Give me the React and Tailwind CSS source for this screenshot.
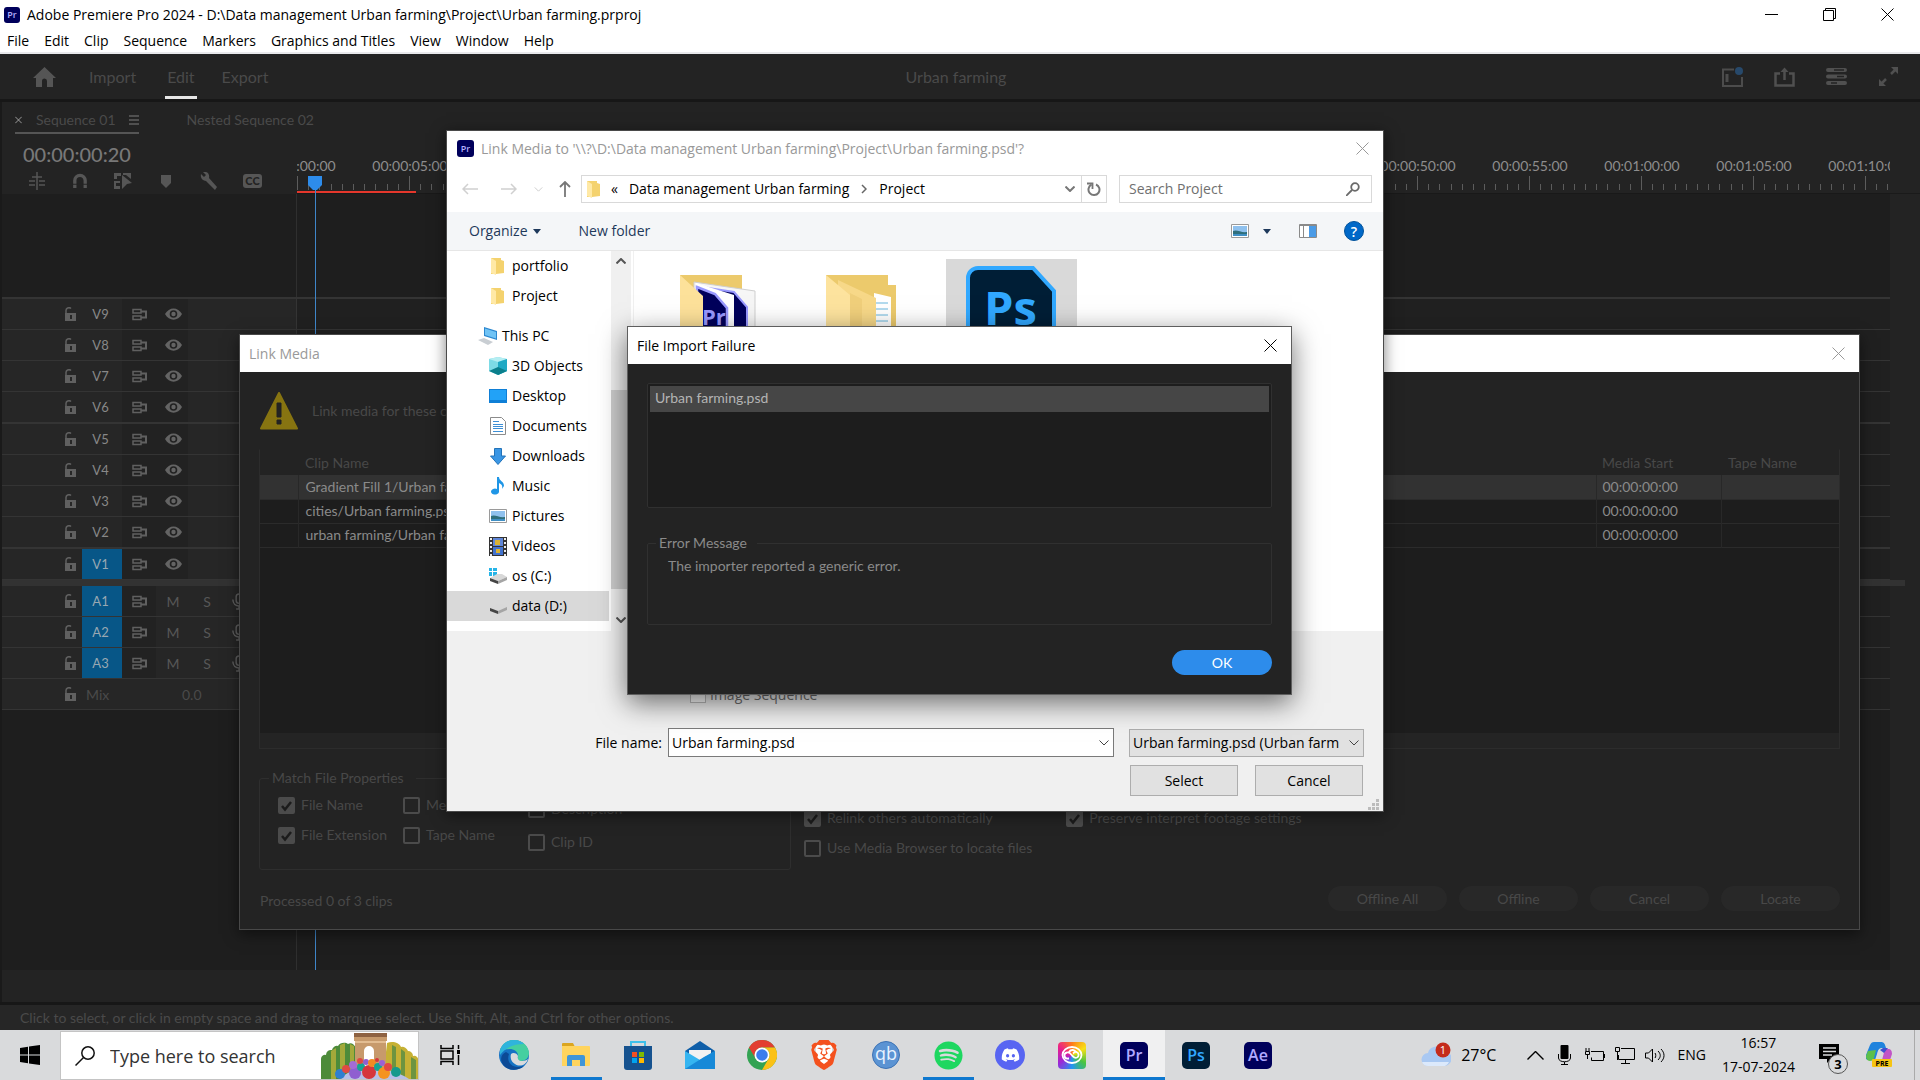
import React from 'react';
import { FaSpotify, FaDiscord } from 'react-icons/fa';
import { FaBrave } from 'react-icons/fa6';

const menus = ['File', 'Edit', 'Clip', 'Sequence', 'Markers', 'Graphics and Titles', 'View', 'Window', 'Help'];

const rulerLabels = [
  '00:00:00:00', '00:00:05:00', '00:00:10:00', '00:00:15:00', '00:00:20:00',
  '00:00:25:00', '00:00:30:00', '00:00:35:00', '00:00:40:00', '00:00:45:00',
  '00:00:50:00', '00:00:55:00', '00:01:00:00', '00:01:05:00', '00:01:10:00',
];

const videoTracks = ['V9', 'V8', 'V7', 'V6', 'V5', 'V4', 'V3', 'V2', 'V1'];
const audioTracks = ['A1', 'A2', 'A3'];

const clips = [
  { name: 'Gradient Fill 1/Urban farming.psd', start: '00:00:00:00', selected: true },
  { name: 'cities/Urban farming.psd', start: '00:00:00:00' },
  { name: 'urban farming/Urban farming.psd', start: '00:00:00:00' },
];

/* ---------- small shared pieces ---------- */

function CloseIcon({ className = '' }) {
  return (
    <svg viewBox="0 0 13 13" className={`h-[13px] w-[13px] ${className}`} fill="none" stroke="currentColor">
      <path d="M.5.5l12 12M12.5.5l-12 12" />
    </svg>
  );
}

function Chevron({ className = '' }) {
  return (
    <svg viewBox="0 0 10 6" className={className} fill="none" stroke="currentColor">
      <path d="M.5.5L5 5 9.5.5" />
    </svg>
  );
}

function AdobeBadge({ label, className }) {
  return (
    <span className={`flex items-center justify-center font-semibold ${className}`}>{label}</span>
  );
}

function DarkCheck({ label, checked = false }) {
  return (
    <label className="flex items-center gap-[6px] whitespace-nowrap">
      <span className="grid">
        <input
          type="checkbox"
          defaultChecked={checked}
          className="peer col-start-1 row-start-1 h-[17px] w-[17px] appearance-none rounded-[2px] border-2 border-[#4b4b4b] checked:bg-[#4b4b4b]"
        />
        <svg viewBox="0 0 17 17" className="pointer-events-none invisible col-start-1 row-start-1 h-[17px] w-[17px] peer-checked:visible" fill="none" stroke="#1c1c1c" strokeWidth="2.5">
          <path d="M4 9l3 3.5L13 5" />
        </svg>
      </span>
      {label}
    </label>
  );
}

/* ---------- premiere window ---------- */

function TitleBar() {
  return (
    <header className="border-b-2 border-[#e8e9ec] bg-white text-[14px] leading-5 text-black">
      <div className="flex h-[29px] items-center pl-1">
        <AdobeBadge label="Pr" className="h-4 w-4 rounded-[3px] bg-[#00005b] text-[9px] leading-4 text-[#b5b0ff]" />
        <span className="ml-[7px]">Adobe Premiere Pro 2024 - D:\Data management Urban farming\Project\Urban farming.prproj</span>
        <div className="ml-auto flex">
          <button aria-label="Minimize" className="flex h-7 w-[58px] items-center justify-center">
            <svg viewBox="0 0 13 13" className="h-[13px] w-[13px]" stroke="#000"><path d="M0 6.5h13" /></svg>
          </button>
          <button aria-label="Restore" className="flex h-7 w-[58px] items-center justify-center">
            <svg viewBox="0 0 13 13" className="h-[13px] w-[13px]" fill="none" stroke="#000"><path d="M.5 2.5h10v10h-10zM2.5 2.5v-2h10v10h-2" /></svg>
          </button>
          <button aria-label="Close" className="mr-[3px] flex h-7 w-[59px] items-center justify-center"><CloseIcon /></button>
        </div>
      </div>
      <nav className="flex h-[23px] items-center gap-[15px] pt-px pl-[7px]">
        {menus.map((m) => <button key={m}>{m}</button>)}
      </nav>
    </header>
  );
}

function WorkspaceBar() {
  return (
    <div className="grid h-12 grid-cols-3 border-b-[3px] border-[#171717] bg-[#232323] text-[16px] text-[#4a4a4a]">
      <div className="flex items-center pl-[33px]">
        <button aria-label="Home">
          <svg viewBox="0 0 23 20" className="h-5 w-[23px]" fill="#555"><path d="M11.500 0L23 11h-3v9h-6v-6a2.500 2.500 0 00-5 0v6H3v-9H0z" /></svg>
        </button>
        <button className="ml-[33px]">Import</button>
        <button className="ml-[29px] h-full border-b-[3px] border-[#e6e6e6] px-0.5 pt-[3px]">Edit</button>
        <button className="ml-[25px]">Export</button>
      </div>
      <div className="flex items-center justify-center pr-2">Urban farming</div>
      <div className="flex items-center justify-end gap-[31px] pr-[21px]">
        <svg viewBox="0 0 21 20" className="h-5 w-[21px]" fill="none" stroke="#4c4c4c" strokeWidth="2">
          <path d="M12 2.500H1V19h19v-9" /><path d="M5 7v8" strokeWidth="3" /><circle cx="17" cy="4" r="4" fill="#27496b" stroke="none" />
        </svg>
        <svg viewBox="0 0 21 20" className="h-5 w-[21px]" fill="none" stroke="#505050" strokeWidth="2.500">
          <path d="M6 6.500H1.500v12h18v-12H15M10.500 13V2" /><path d="M6.500 5l4-4.500 4 4.500z" fill="#505050" stroke="none" />
        </svg>
        <svg viewBox="0 0 21 18" className="h-[18px] w-[21px]" fill="#505050">
          <path d="M2 0h17a2 2 0 010 4H2a2 2 0 010-4zM2 6.500h17a2 2 0 010 4H2a2 2 0 010-4zM2 13h17a2 2 0 010 4H2a2 2 0 010-4z" />
          <path d="M8 2h10M11 8.500h7M5 15h6" stroke="#232323" strokeWidth="1.500" />
        </svg>
        <svg viewBox="0 0 21 21" className="h-[21px] w-[21px]" fill="#505050" stroke="#505050" strokeWidth="2.500">
          <path d="M13 8l5-5M8 13l-5 5" /><path d="M13 1h7v7zM1 13v7h7z" stroke="none" />
        </svg>
      </div>
    </div>
  );
}

function TimelineTools() {
  return (
    <div className="flex h-[19px] items-center gap-[25px] pl-[26px] text-[#565656]">
      <svg viewBox="0 0 18 18" className="h-[18px] w-[18px]" fill="none" stroke="currentColor" strokeWidth="1.500">
        <path d="M9 0v18M4 5h10M1 9h6M11 9h6M1 13h6M11 13h6" />
      </svg>
      <svg viewBox="0 0 18 18" className="h-[17px] w-[18px]" fill="none" stroke="currentColor" strokeWidth="3.500">
        <path d="M3.500 17V9a5.500 5.500 0 0111 0v8" /><path d="M1 13h5M12 13h5" stroke="#232323" strokeWidth="1" />
      </svg>
      <svg viewBox="0 0 18 18" className="h-[18px] w-[18px]" fill="currentColor">
        <path d="M0 1h7v3H3v3H0zM9 1h8v6l-5-4H9zM0 9h6v2H2v3h4v3H0z" /><path d="M8 3l10 8-5 1-5 5z" />
      </svg>
      <svg viewBox="0 0 18 18" className="h-[18px] w-[18px]" fill="currentColor"><path d="M4 3h10v8l-5 5-5-5z" /></svg>
      <svg viewBox="0 0 18 18" className="h-[18px] w-[18px]" fill="currentColor">
        <path d="M1 2l3 3 2-2-3-3c4-1 7 2 6 6l8 9-2 3-9-9C3 9 0 6 1 2z" />
      </svg>
      <span className="flex h-[14px] w-[19px] items-center justify-center rounded-[3px] bg-[#565656] text-[11px] leading-3 font-black text-[#232323]">CC</span>
    </div>
  );
}

function Lock() {
  return (
    <svg viewBox="0 0 12 14" className="mr-[6px] h-[14px] w-3 shrink-0" fill="#606060">
      <path d="M1 6h11v8H1z" /><path d="M2 7V4a3 3 0 015-2.500" fill="none" stroke="#606060" strokeWidth="1.500" /><path d="M6 8h2v4H6z" fill="#262626" />
    </svg>
  );
}

function SyncLock() {
  return (
    <svg viewBox="0 0 16 13" className="h-[13px] w-4 shrink-0" fill="none" stroke="#606060" strokeWidth="1.500">
      <path d="M1 1.500h8v3.500H1zM1 8h8v3.500H1z" /><path d="M9 3.500h5v6H9" strokeWidth="2" />
    </svg>
  );
}

function TrackRow({ label, audio, groupEnd }) {
  const targeted = audio || label === 'V1';
  return (
    <div className={`flex border-[#343434] ${groupEnd ? 'h-8 border-b-2' : 'h-[31px] border-b'}`}>
      <div className="flex w-[294px] shrink-0 items-center bg-[#262626] pl-[62px]">
        <Lock />
        <span className={`flex h-[30px] w-10 items-center justify-center pt-[2px] pr-[3px] text-[13px] ${targeted ? 'bg-[#075687] text-[#98a8b2]' : 'text-[#888]'}`}>
          {label}
        </span>
        {audio ? (
          <>
            <span className="flex h-[30px] w-[34px] items-center bg-[#222] pl-[10px]"><SyncLock /></span>
            <button className="w-[34px] text-[14px] text-[#575757]">M</button>
            <button className="w-[34px] text-[14px] text-[#575757]">S</button>
            <svg viewBox="0 0 16 18" className="ml-[7px] h-[17px] w-4" fill="none" stroke="#606060" strokeWidth="1.500">
              <rect x="5" y="1" width="6" height="10" rx="3" /><path d="M1.500 7c0 9 13 9 13 0M8 14v3M5 17h6" />
            </svg>
          </>
        ) : (
          <span className="flex h-[30px] w-[66px] items-center bg-[#222] pl-[10px]">
            <SyncLock />
            <svg viewBox="0 0 17 12" className="ml-[17px] h-3 w-[17px]" fill="#646464">
              <path d="M0 6c4-7.500 13-7.500 17 0-4 7.500-13 7.500-17 0z" /><circle cx="8.500" cy="6" r="3.800" fill="#222" /><circle cx="8.500" cy="6" r="2.200" />
            </svg>
          </span>
        )}
      </div>
      <div className="flex-1 border-l border-[#343434] bg-[#202020]" />
    </div>
  );
}

function Ruler() {
  return (
    <div className="relative min-w-0 flex-1 overflow-hidden border-b border-[#191919]">
      <div className="-ml-[55px] flex pt-[17px] text-[14px] leading-[21px] text-[#8d8d8d]">
        {rulerLabels.map((t) => <span key={t} className="w-28 shrink-0 text-center">{t}</span>)}
      </div>
      <div className="flex h-[14px]">
        {rulerLabels.map((t) => (
          <div key={t} className="grid w-28 shrink-0 grid-cols-10 items-end">
            <i className="h-[14px] border-l border-[#5c5c5c]" />
            {[1, 2, 3, 4, 5, 6, 7, 8, 9].map((n) => <i key={n} className="h-[6px] border-l border-[#5c5c5c]" />)}
          </div>
        ))}
      </div>
      <div className="mt-px h-[3px] w-[119px] bg-[#e5372c]" />
    </div>
  );
}

function Timeline() {
  return (
    <main className="flex flex-1 flex-col border-l-2 border-[#1a1a1a] bg-[#232323] text-[#4a4a4a]">
      <div className="flex h-9 items-start text-[14px] leading-5">
        <div className="ml-[13px] flex items-center border-b-2 border-[#555] pt-2 pb-[2px]">
          <button aria-label="Close sequence"><CloseIcon className="h-[8px]! w-[7px]! stroke-[1.5] text-[#b8b8b8]" /></button>
          <span className="ml-[14px]">Sequence 01</span>
          <svg viewBox="0 0 10 10" className="ml-[13px] h-[10px] w-[10px]" stroke="#606060" strokeWidth="1.500"><path d="M0 1h10M0 5h10M0 9h10" /></svg>
        </div>
        <span className="ml-[48px] pt-2">Nested Sequence 02</span>
      </div>
      <div className="flex h-14">
        <div className="flex w-[295px] shrink-0 flex-col pt-[2px]">
          <span className="mb-[3px] pl-[21px] text-[20px] leading-[28px] font-medium text-[#787878]">00:00:00:20</span>
          <TimelineTools />
        </div>
        <Ruler />
        <div className="w-[30px] border-b border-[#1a1a1a]" />
      </div>
      <div className="flex flex-1">
        <div className="relative flex min-w-0 flex-1 flex-col bg-[#1e1e1e]">
          <div className="flex h-[105px] border-b-2 border-[#343434]">
            <div className="w-[295px] border-r border-[#2f2f2f]" />
          </div>
          {videoTracks.map((t) => <TrackRow key={t} label={t} groupEnd={t === 'V6' || t === 'V2'} />)}
          <div className="h-[6px] bg-[#323232]" />
          {audioTracks.map((t) => <TrackRow key={t} label={t} audio />)}
          <div className="flex h-[31px] border-b border-[#343434]">
            <div className="flex w-[294px] items-center bg-[#262626] pl-[62px] text-[14px]">
              <Lock /><span className="ml-1 w-[96px]">Mix</span><span>0.0</span>
            </div>
            <div className="flex-1 border-l border-[#343434] bg-[#202020]" />
          </div>
          <div className="w-[295px] flex-1 border-r border-[#2f2f2f]" />
          {/* playhead */}
          <div className="absolute -top-[18px] bottom-0 left-[306px] flex w-[14px] flex-col items-center">
            <svg viewBox="0 0 14 14" className="h-[14px] w-[14px] shrink-0" fill="#2d8ceb"><path d="M0 0h14v9l-5 5H5L0 9z" /></svg>
            <div className="w-px flex-1 bg-[#3f86c9]" />
          </div>
        </div>
        <div className="w-[30px] pt-[386px]"><div className="h-[6px] w-[15px] bg-[#323232]" /></div>
      </div>
      <div className="h-8" />
    </main>
  );
}

/* ---------- link media dialog ---------- */

function LinkMediaDialog() {
  return (
    <section className="absolute top-[334px] right-[60px] left-[239px] border border-[#484848] bg-[#232323] text-[14px] leading-5 text-[#484848] shadow-[0_4px_14px_rgba(0,0,0,0.5)]">
      <div className="flex h-[37px] items-center justify-between bg-white pr-[14px] pl-[9px] font-['Open_Sans',sans-serif] text-[#999]">
        Link Media
        <button aria-label="Close"><CloseIcon /></button>
      </div>
      <div className="px-[19px] pb-[18px]">
        <div className="flex h-[77px] items-center gap-[14px] pl-px">
          <svg viewBox="0 0 38 38" className="h-[38px] w-[38px]" fill="#877411">
            <path d="M19 1l18 35.500H1z" stroke="#877411" strokeWidth="2" strokeLinejoin="round" /><path d="M17 11h4v14h-4zM17 28h4v4h-4z" fill="#232323" stroke="#232323" />
          </svg>
          <span>Link media for these clips:</span>
        </div>
        <div className="flex h-[300px] flex-col border border-[#2c2c2c] border-t-[#232323] bg-[#1d1d1d]">
          <table className="w-full table-fixed border-collapse text-left">
            <thead className="bg-[#232323]">
              <tr className="h-[25px]">
                <th className="w-[38px]" aria-label="Status" />
                <th className="pl-[7px] font-normal">Clip Name</th>
                <th className="w-[125px] pl-[6px] font-normal">Media Start</th>
                <th className="w-[118px] pl-[7px] font-normal">Tape Name</th>
              </tr>
            </thead>
            <tbody className="text-[#8a8a8a]">
              {clips.map((c) => (
                <tr key={c.name} className={`h-6 border-b border-[#2b2b2b] leading-[22px] ${c.selected ? 'bg-[#323232]' : ''}`}>
                  <td className="border-r border-[#282828]" />
                  <td className="border-r border-[#282828] pl-[7px]">{c.name}</td>
                  <td className="border-r border-[#282828] pl-[6px]">{c.start}</td>
                  <td />
                </tr>
              ))}
            </tbody>
          </table>
          <div className="mt-auto h-[15px] bg-[#242424]" />
        </div>
        <div className="mt-[19px] flex">
          <fieldset className="h-[102px] w-[532px] rounded-[3px] border border-[#2e2e2e] px-[11px]">
            <legend className="-ml-0.5 pr-3 pl-[3px]">Match File Properties</legend>
            <div className="flex pt-[7px] pl-[7px]">
              <div className="flex w-[125px] flex-col gap-[10px]">
                <DarkCheck label="File Name" checked /><DarkCheck label="File Extension" checked />
              </div>
              <div className="flex w-[125px] flex-col gap-[10px]">
                <DarkCheck label="Media Start" /><DarkCheck label="Tape Name" />
              </div>
              <div className="flex flex-col gap-[13px] pt-1">
                <DarkCheck label="Description" /><DarkCheck label="Clip ID" />
              </div>
            </div>
          </fieldset>
          <div className="ml-[13px] flex gap-[34px] pt-[40px]">
            <div className="flex flex-col gap-[10px]">
              <DarkCheck label="Relink others automatically" checked />
              <DarkCheck label="Use Media Browser to locate files" />
            </div>
            <div>
              <DarkCheck label="Preserve interpret footage settings" checked />
            </div>
          </div>
        </div>
        <div className="mt-[16px] flex items-center gap-[12px]">
          <span className="mr-auto pt-1 pl-px">Processed 0 of 3 clips</span>
          {['Offline All', 'Offline', 'Cancel', 'Locate'].map((b) => (
            <button key={b} className="h-[25px] w-[119px] rounded-full bg-[#282828]">{b}</button>
          ))}
        </div>
      </div>
    </section>
  );
}

/* ---------- file picker ---------- */

function FolderSmall() {
  return (
    <svg viewBox="0 0 13 17" className="h-[17px] w-[13px]">
      <path d="M0 0h10v2l3 1v12l-8 1H0z" fill="#f4d26e" /><path d="M0 0l5 3v14l-5-2z" fill="#ffe9a6" />
    </svg>
  );
}

function Drive({ win }) {
  return (
    <svg viewBox="0 0 18 16" className="h-4 w-[18px]">
      {win && <path d="M0 0h3v3H0zM4 0h4v3H4zM0 4h3v4H0zM4 4h4v4H4z" fill="#25b4e8" />}
      <path d="M1 10l7-4h5l5 3-9 4z" fill="#d8d8d8" /><path d="M1 10l8 3v3l-8-3z" fill="#454545" /><path d="M9 13l9-4v3l-9 4z" fill="#a5a5a5" />
    </svg>
  );
}

function PictureIcon() {
  return (
    <svg viewBox="0 0 18 14" className="h-[14px] w-[18px]">
      <path d="M.5.5h17v13H.5z" fill="#fff" stroke="#9a9a9a" /><path d="M2 2h14v10H2z" fill="#8fc1ee" /><path d="M2 7c4-2 8 2 14 1v4H2z" fill="#2f6f7c" /><path d="M2 10h14v2H2z" fill="#3f8fc4" />
    </svg>
  );
}

const places = [
  { label: 'portfolio', icon: <FolderSmall /> },
  { label: 'Project', icon: <FolderSmall /> },
  {
    label: 'This PC', root: true,
    icon: (
      <svg viewBox="0 0 20 20" className="h-5 w-5">
        <path d="M6 1l13 4v9L6 10z" fill="#2b87cf" /><path d="M7 2.500l11 3.500v6.500L7 9z" fill="#6fc3f5" /><path d="M0 14l6-2 9 4-5 3z" fill="#c9ced3" />
      </svg>
    ),
  },
  {
    label: '3D Objects',
    icon: (
      <svg viewBox="0 0 18 18" className="h-[18px] w-[18px]">
        <path d="M0 2l9-2 9 2v12l-9 4-9-4z" fill="#7ddbe6" /><path d="M9 0l9 2-9 3-9-3z" fill="#b5eef2" /><path d="M9 5l9-3v12l-9 4z" fill="#1fa9c4" /><path d="M0 14l9-4 9 4-9 4z" fill="#0b7f8c" />
      </svg>
    ),
  },
  {
    label: 'Desktop',
    icon: <svg viewBox="0 0 18 14" className="h-[14px] w-[18px]"><path d="M0 0h18v14H0z" fill="#0f7fd6" /><path d="M1 1h16v10H1z" fill="#22a2f7" /></svg>,
  },
  {
    label: 'Documents',
    icon: (
      <svg viewBox="0 0 16 18" className="h-[18px] w-4" stroke="#8b8b8b">
        <path d="M.5.5h11l4 4v13H.5z" fill="#fff" /><path d="M3 4.500h6M3 7.500h10M3 9.500h10M3 11.500h10M3 14.500h10" stroke="#3d8fd6" />
      </svg>
    ),
  },
  {
    label: 'Downloads',
    icon: <svg viewBox="0 0 16 17" className="h-[17px] w-4"><path d="M4.500.5h7V8h4L8 16.500.5 8h4z" fill="#3a96e4" stroke="#2273b9" /></svg>,
  },
  {
    label: 'Music',
    icon: <svg viewBox="0 0 14 18" className="h-[18px] w-[14px]"><path d="M6 0h2c0 4 5 4 5 9l-2 3c1-4-1-5-3-6v9a4 3 0 11-2-3z" fill="#1f96e6" /></svg>,
  },
  { label: 'Pictures', icon: <PictureIcon /> },
  {
    label: 'Videos',
    icon: (
      <svg viewBox="0 0 18 19" className="h-[19px] w-[18px]">
        <path d="M0 0h18v19H0z" fill="#333" /><path d="M4 1h10v8H4z" fill="#5f86d8" /><path d="M4 10h10v8H4z" fill="#4273cf" /><path d="M6 3h5v5H6zM7 12h4v4H7z" fill="#d9b234" />
        <path d="M2 1v18M16 1v18" stroke="#eee" strokeWidth="2" strokeDasharray="2 2" />
      </svg>
    ),
  },
  { label: 'os (C:)', icon: <Drive win /> },
  { label: 'data (D:)', icon: <Drive />, current: true },
];

function FilePicker() {
  return (
    <section className="absolute top-[130px] left-[446px] flex h-[682px] w-[938px] flex-col border border-[#4a4a4a] bg-white font-['Open_Sans',sans-serif] text-[14px] leading-5 text-black shadow-[0_3px_14px_rgba(0,0,0,0.5)]">
      <div className="flex h-[35px] items-center pr-[14px] pl-[10px] text-[#999]">
        <AdobeBadge label="Pr" className="h-[17px] w-[17px] rounded-[3px] bg-[#00005b] text-[9px] leading-4 text-[#b5b0ff]" />
        <span className="ml-[7px]">{"Link Media to '\\\\?\\D:\\Data management Urban farming\\Project\\Urban farming.psd'?"}</span>
        <button aria-label="Close" className="ml-auto"><CloseIcon /></button>
      </div>

      <div className="flex h-[46px] items-center pr-[11px] pl-[15px] text-[#777]">
        <svg viewBox="0 0 16 12" className="h-3 w-4" fill="none" stroke="#d0d0d0" strokeWidth="1.500"><path d="M16 6H1M6 1L1 6l5 5" /></svg>
        <svg viewBox="0 0 16 12" className="ml-[23px] h-3 w-4" fill="none" stroke="#d0d0d0" strokeWidth="1.500"><path d="M0 6h15M10 1l5 5-5 5" /></svg>
        <Chevron className="ml-[17px] h-[5px] w-[9px] text-[#c4c4c4]" />
        <svg viewBox="0 0 12 16" className="ml-[16px] h-4 w-3" fill="none" stroke="#777" strokeWidth="1.800"><path d="M6 16V1M1 6l5-5 5 5" /></svg>
        <div className="ml-[10px] flex h-[28px] flex-1 items-center border border-[#d9d9d9] pl-[5px] text-black">
          <FolderSmall />
          <span className="ml-[11px]">«</span>
          <span className="ml-[11px]">Data management Urban farming</span>
          <svg viewBox="0 0 6 10" className="ml-[12px] h-[10px] w-[6px]" fill="none" stroke="#666" strokeWidth="1.500"><path d="M1 1l4 4-4 4" /></svg>
          <span className="ml-[12px]">Project</span>
          <button aria-label="Previous locations" className="mr-[6px] ml-auto"><Chevron className="h-[6px] w-[10px] stroke-2 text-[#777]" /></button>
          <button aria-label="Refresh" className="flex h-full w-[25px] items-center justify-center border-l border-[#d9d9d9]">
            <svg viewBox="0 0 14 15" className="h-[15px] w-[14px]" fill="none" stroke="#777" strokeWidth="2"><path d="M9 2.500a5.500 5.500 0 11-4.500.2" /><path d="M0 1.500h5.500V7" strokeWidth="1.800" /></svg>
          </button>
        </div>
        <label className="ml-[12px] flex h-[28px] w-[253px] items-center border border-[#d9d9d9] pr-[11px] pl-[9px]">
          <input aria-label="Search Project" placeholder="Search Project" className="w-0 flex-1 outline-none placeholder:text-[#707070]" />
          <svg viewBox="0 0 14 14" className="h-[14px] w-[14px]" fill="none" stroke="#6a6a6a" strokeWidth="1.800"><circle cx="9" cy="5" r="3.800" /><path d="M6 8l-6 6" /></svg>
        </label>
      </div>

      <div className="flex h-[39px] items-center border-b border-[#e6e6e6] bg-[#f4f6f8] pr-[19px] pl-[22px] text-[#1e395b]">
        <button className="flex items-center gap-[5px]">
          Organize
          <svg viewBox="0 0 8 5" className="h-[5px] w-2" fill="#1e395b"><path d="M0 0h8L4 5z" /></svg>
        </button>
        <button className="ml-[38px]">New folder</button>
        <span className="ml-auto"><PictureIcon /></span>
        <svg viewBox="0 0 8 5" className="ml-[14px] h-[5px] w-2" fill="#1e395b"><path d="M0 0h8L4 5z" /></svg>
        <svg viewBox="0 0 18 14" className="ml-[28px] h-[14px] w-[18px]"><path d="M.5.5h17v13H.5z" fill="#fff" stroke="#8a8a8a" /><path d="M4.500 1v12M0 1.500h18" stroke="#8a8a8a" /><path d="M10 2h7v11h-7z" fill="#4a9be6" /></svg>
        <button aria-label="Help" className="ml-[27px] h-5 w-5 rounded-full border border-[#00529b] bg-[#0068c8] text-center leading-[17px] font-semibold text-white">?</button>
      </div>

      <div className="flex h-[380px]">
        <ul className="w-[162px] shrink-0">
          {places.map((p) => (
            <li
              key={p.label}
              className={`flex h-[30px] items-center ${p.root ? 'mt-[10px] gap-[4px] pl-[31px]' : 'gap-[5px] pl-[41px]'} ${p.current ? 'bg-[#d9d9d9]' : ''}`}
            >
              <span className={`flex justify-center ${p.root ? '' : 'w-[19px]'}`}>{p.icon}</span>
              {p.label}
            </li>
          ))}
        </ul>
        <div className="ml-[2px] flex w-[20px] shrink-0 flex-col items-center bg-[#f0f0f0]">
          <Chevron className="mt-[7px] h-[6px] w-[10px] rotate-180 stroke-2 text-[#555]" />
          <div className="mt-[126px] h-[199px] w-full bg-[#cdcdcd]" />
          <Chevron className="mt-[28px] h-[6px] w-[10px] stroke-2 text-[#555]" />
        </div>
        <div className="ml-[2px] flex flex-1 border-l border-[#f0f0f0] pt-2">
          <svg viewBox="0 0 76 76" className="mt-4 ml-[46px] h-[76px] w-[76px]">
            <path d="M0 0h62v76H0z" fill="#ecca6c" /><path d="M14 7l61 9v60H14z" fill="#f6f6f6" stroke="#cfcfcf" />
            <path d="M28 13l26 4 13 15v44H28z" fill="#00005b" stroke="#9999ff" strokeWidth="2" />
            <path d="M16 8l38 12v56H16z" fill="#fff" />
            <path d="M17 12l18 7 12 14v43H17z" fill="#00005b" stroke="#9999ff" strokeWidth="2.500" />
            <text x="22" y="50" fill="#9999ff" fontSize="22" fontWeight="700">Pr</text>
            <path d="M0 0l23 21v55H0z" fill="#fde19a" />
          </svg>
          <svg viewBox="0 0 72 76" className="mt-4 ml-[70px] h-[76px] w-[72px]">
            <path d="M0 0h62v10h8v66H0z" fill="#ecca6c" /><path d="M48 18l17 4v54H48z" fill="#fff" />
            <path d="M50 28h12M50 34h12M50 40h12M50 46h12" stroke="#66b5dc" /><path d="M12 5l38 18v53H12z" fill="#f7d888" /><path d="M0 0l24 20v56H0z" fill="#fde39e" /><path d="M24 18l12 6v52H24z" fill="#f0cf7b" />
          </svg>
          <div className="ml-[48px] h-[131px] w-[131px] bg-[#d9d9d9] pt-[7px] pl-[20px]">
            <svg viewBox="0 0 90 100" className="h-[100px] w-[90px]">
              <path d="M12 2h55l21 23v73H2V12A10 10 0 0112 2z" fill="#001e36" stroke="#31a8ff" strokeWidth="4" />
              <text x="18" y="59" fill="#31a8ff" fontSize="47" fontWeight="700">Ps</text>
            </svg>
          </div>
        </div>
      </div>

      <div className="flex flex-1 flex-col bg-[#f0f0f0] pt-[54px]">
        <label className="ml-[243px] flex h-5 w-max items-center gap-1 text-[#6d6d6d]">
          <input type="checkbox" className="h-4 w-4 appearance-none border border-[#bcbcbc] bg-white" />
          Image Sequence
        </label>
        <div className="mt-[23px] flex items-center pr-[19px]">
          <label htmlFor="file-name" className="w-[221px] pr-[6px] text-right">File name:</label>
          <span className="grid flex-1 items-center">
            <input id="file-name" defaultValue="Urban farming.psd" className="col-start-1 row-start-1 h-[29px] w-full border border-[#7a7a7a] bg-white pl-[3px] outline-none" />
            <Chevron className="col-start-1 row-start-1 mr-[5px] h-[6px] w-[10px] justify-self-end text-[#444]" />
          </span>
          <span className="ml-[15px] grid w-[235px] items-center">
            <select aria-label="File type" className="col-start-1 row-start-1 h-[28px] w-full appearance-none border border-[#adadad] bg-[#e1e1e1] pl-[3px]">
              <option>Urban farming.psd (Urban farm</option>
            </select>
            <Chevron className="pointer-events-none col-start-1 row-start-1 mr-[5px] h-[6px] w-[10px] justify-self-end text-[#444]" />
          </span>
        </div>
        <div className="mt-[8px] flex justify-end gap-[17px] pr-[20px]">
          <button className="h-[31px] w-[108px] border border-[#adadad] bg-[#e1e1e1]">Select</button>
          <button className="h-[31px] w-[108px] border border-[#adadad] bg-[#e1e1e1]">Cancel</button>
        </div>
        <svg viewBox="0 0 12 12" className="mt-[3px] mr-[3px] h-3 w-3 self-end" fill="#bcbcbc"><path d="M8 0h3v3H8zM4 4h3v3H4zM8 4h3v3H8zM0 8h3v3H0zM4 8h3v3H4zM8 8h3v3H8z" /></svg>
      </div>
    </section>
  );
}

/* ---------- import failure dialog ---------- */

function ImportFailure() {
  return (
    <section role="alertdialog" className="absolute top-[326px] left-[627px] h-[369px] w-[665px] border border-[#5e5e5e] bg-[#232323] text-[14px] leading-5 text-[#8a8a8a] shadow-[0_8px_26px_rgba(0,0,0,0.55)]">
      <div className="flex h-[37px] items-center justify-between bg-white pr-[14px] pl-[9px] font-['Open_Sans',sans-serif] text-black">
        File Import Failure
        <button aria-label="Close"><CloseIcon /></button>
      </div>
      <div className="px-[19px] pt-[19px]">
        <ul className="h-[125px] rounded-[2px] border border-[#303030] bg-[#1d1d1d] p-[2px]">
          <li className="h-[26px] bg-[#464646] pl-[5px] leading-[23px] text-[#b4b4b4]">Urban farming.psd</li>
        </ul>
        <fieldset className="mt-[25px] h-[92px] rounded-[2px] border border-[#303030] px-[9px]">
          <legend className="-ml-px pr-[10px] pl-[3px]">Error Message</legend>
          <p className="pt-[3px] pl-[11px]">The importer reported a generic error.</p>
        </fieldset>
        <div className="mt-[25px] flex justify-end">
          <button className="h-[25px] w-[100px] rounded-full bg-[#2d8ceb] text-white">OK</button>
        </div>
      </div>
    </section>
  );
}

/* ---------- windows taskbar ---------- */

function SearchArt() {
  const balloons = [
    [19, 41, 5, '#2f7fd1'], [25, 36, 4, '#e04a43'], [34, 40, 6, '#8f5fd0'], [32, 32, 4, '#a46bd6'], [40, 34, 4, '#16a394'],
    [48, 39, 7, '#d6363c'], [45, 29, 3, '#8f5fd0'], [51, 30, 4, '#f08a24'], [57, 34, 4, '#16a394'], [63, 40, 6, '#f5931f'],
    [61, 30, 3, '#9b62d4'], [67, 34, 4, '#e04a43'], [75, 39, 5, '#14998c'], [39, 28, 3, '#e04a43'], [56, 27, 2, '#d6363c'],
  ];
  return (
    <svg viewBox="0 0 97 46" className="h-[46px] w-[97px]">
      <path d="M0 46V26a4 4 0 015-4 5 5 0 016-5 5 5 0 016-4c2-4 8-4 10-2 3-2 6 0 8 4l3 31z" fill="#4d8b3a" />
      <path d="M10 46V18l5-3v31zM19 46V12l5-2v36zM29 46V11l4 2v33z" fill="#a3a93a" />
      <path d="M97 46V28a4 4 0 00-5-5 5 5 0 00-5-5 6 6 0 00-7-4c-2-5-9-6-14-4l-4 36z" fill="#c6b134" />
      <path d="M71 46V12l4 2v32zM80 46V16l4 3v27zM90 46V24l5 3v19z" fill="#6d9440" />
      <path d="M33 0h33v8h-1v30H53V18a5 5 0 00-10 0v20H34V8h-1z" fill="#c79a6c" /><path d="M33 0h33v4H33z" fill="#8e6242" /><path d="M34 8h31v2H34z" fill="#e3bd92" />
      <path d="M20 46c8-14 48-14 68 0z" fill="#b7bfe6" />
      {balloons.map(([x, y, r, c]) => <circle key={`${x}-${y}`} cx={x} cy={y} r={r} fill={c} />)}
    </svg>
  );
}

const pinned = [
  {
    name: 'Edge',
    icon: (
      <svg viewBox="0 0 30 30" className="h-[30px] w-[30px]">
        <circle cx="15" cy="15" r="15" fill="#1673c4" />
        <path d="M1 11C3 3 9 0 15 0c9 0 15 7 15 13 0 5-4 8-8 8-3 0-4-2-3-4 1-5-4-8-8-8-5 0-8 1-10 2z" fill="#45cfa0" />
        <path d="M1 11C3 3 9 0 15 0c4 0 8 2 10 4C16 4 8 6 1 15z" fill="#2fb4dc" />
        <path d="M10 14c-3 8 3 16 15 12-6 5-15 5-20 0-5-6-3-12 2-14z" fill="#0c4a96" />
        <path d="M12 14c2-2 6-1 7 2-1 3 1 5 4 5 2 0 5-1 6-2-2 7-9 8-13 5-4-2-5-7-4-10z" fill="#d9dadc" />
      </svg>
    ),
  },
  {
    name: 'File Explorer', mark: 'w-[51px]',
    icon: (
      <svg viewBox="0 0 28 24" className="h-6 w-7">
        <path d="M0 1a1 1 0 011-1h10l2 4h-13z" fill="#dba520" /><path d="M0 3h27a1 1 0 011 1v18a1 1 0 01-1 1H0z" fill="#ffd45e" />
        <path d="M5 23v-9a2 2 0 012-2h14a2 2 0 012 2v9h-5v-6h-8v6z" fill="#3f95d8" />
      </svg>
    ),
  },
  {
    name: 'Store',
    icon: (
      <svg viewBox="0 0 30 30" className="h-[30px] w-[30px]">
        <path d="M8 7V2h14v5" fill="none" stroke="#3fc0ea" strokeWidth="2" /><path d="M1 6h28v21a3 3 0 01-3 3H4a3 3 0 01-3-3z" fill="#16528f" />
        <path d="M9 12h5v5H9z" fill="#f25022" /><path d="M16 12h5v5h-5z" fill="#7fba00" /><path d="M9 18h5v5H9z" fill="#00a4ef" /><path d="M16 18h5v5h-5z" fill="#ffb900" />
      </svg>
    ),
  },
  {
    name: 'Mail',
    icon: (
      <svg viewBox="0 0 30 28" className="h-7 w-[30px]">
        <path d="M0 10L15 0l15 10v4H0z" fill="#0f5ea8" /><path d="M4 9h22v10H4z" fill="#f2f2f2" /><path d="M0 10l15 9 15-9v18H0z" fill="#35b5f1" /><path d="M0 28l19-12 11-6v18z" fill="#1789d8" />
      </svg>
    ),
  },
  {
    name: 'Chrome',
    icon: (
      <svg viewBox="0 0 30 30" className="h-[30px] w-[30px]">
        <circle cx="15" cy="15" r="15" fill="#33a353" /><path d="M2 7.500A15 15 0 0128 7.500H15a7.500 7.500 0 00-6.500 11z" fill="#e23e31" /><path d="M28 7.500A15 15 0 0115 30l6.500-11.300A7.500 7.500 0 0015 7.500z" fill="#fbc116" />
        <circle cx="15" cy="15" r="7.500" fill="#fff" /><circle cx="15" cy="15" r="5.800" fill="#3b7ded" />
      </svg>
    ),
  },
  { name: 'Brave', icon: <span className="grid place-items-center"><i className="col-start-1 row-start-1 h-5 w-4 bg-white" /><FaBrave className="col-start-1 row-start-1 h-[30px] w-[28px] text-[#f4511e]" /></span> },
  { name: 'qBittorrent', icon: <span className="flex h-7 w-7 items-center justify-center rounded-full border border-[#3c72b4] bg-[#5b93d3] pb-1 text-[18px] leading-6 text-[#e8f2ff]">qb</span> },
  { name: 'Spotify', mark: 'w-[51px]', icon: <span className="rounded-full bg-black"><FaSpotify className="h-[29px] w-[29px] text-[#1ed760]" /></span> },
  { name: 'Discord', icon: <span className="flex h-[30px] w-[30px] items-center justify-center rounded-full bg-[#5865f2]"><FaDiscord className="h-[18px] w-[19px] text-white" /></span> },
  {
    name: 'Creative Cloud',
    icon: (
      <span className="flex h-[27px] w-[28px] items-center justify-center rounded-[4px] bg-[conic-gradient(from_0deg,#ff7b1a,#f7e017,#4ac441,#2196f3,#9c27d6,#e91e8c,#ff7b1a)]">
        <svg viewBox="0 0 22 18" className="h-[18px] w-[22px]" fill="none" stroke="#fff" strokeWidth="1.800">
          <ellipse cx="11" cy="9" rx="9.500" ry="8" /><path d="M8 12.500H7a3 3 0 01-1-6c3-1 4 2 5.500 3.500S14 12.500 16 11.500a3 3 0 00-.5-5.500c-1.500-.3-2.500.5-3.500 1.500M8 6c2-3 6-2.500 7 .5" />
        </svg>
      </span>
    ),
  },
  { name: 'Premiere Pro', mark: 'w-[62px]', active: true, icon: <AdobeBadge label="Pr" className="h-[27px] w-[28px] rounded-[5px] bg-[#00005b] text-[16px] text-[#b0a9ff]" /> },
  { name: 'Photoshop', icon: <AdobeBadge label="Ps" className="h-[27px] w-[28px] rounded-[5px] bg-[#001e36] text-[16px] text-[#31a8ff]" /> },
  { name: 'After Effects', icon: <AdobeBadge label="Ae" className="h-[27px] w-[28px] rounded-[5px] bg-[#00005b] text-[16px] text-[#b0a9ff]" /> },
];

function Tray() {
  return (
    <div className="ml-auto flex h-full items-center text-black">
      <svg viewBox="0 0 30 26" className="h-[26px] w-[30px]">
        <path d="M7 24a6.500 6.500 0 010-13 8 8 0 0115-2 7 7 0 012 15z" fill="#a9c8f2" /><path d="M7 24a6.500 6.500 0 01-6-4h27a7 7 0 01-4 4z" fill="#dce9fb" />
        <circle cx="22" cy="8" r="7.500" fill="#c42b1c" /><text x="22" y="12" fill="#fff" fontSize="11" textAnchor="middle">1</text>
      </svg>
      <span className="ml-[10px] text-[16px]">27°C</span>
      <svg viewBox="0 0 17 9" className="ml-[31px] h-[9px] w-[17px]" fill="none" stroke="#000" strokeWidth="1.400"><path d="M.5 8.500l8-8 8 8" /></svg>
      <svg viewBox="0 0 13 20" className="ml-[14px] h-5 w-[13px]"><rect x="2.500" y="0" width="8" height="14" rx="1" /><path d="M.5 9v4c0 5 12 5 12 0V9M6.500 17v3M3 19.500h7" fill="none" stroke="#000" /></svg>
      <svg viewBox="0 0 20 14" className="ml-[14px] h-[14px] w-5" fill="none" stroke="#000"><path d="M6 3.500h12.500v9h-12v-3M19.500 6v4M1 0v3M4 0v3M.5 3.500h4v3h-4zM2.500 7v4" /></svg>
      <svg viewBox="0 0 20 17" className="ml-[10px] h-[17px] w-5" fill="none" stroke="#000"><path d="M6 1.500h13.500v11H3.500V8M6 16.500h9M10.500 13v3M.5.5h4v4h-4zM2.500 5v8" /></svg>
      <svg viewBox="0 0 20 17" className="ml-[10px] h-[17px] w-5" fill="none" stroke="#000"><path d="M.5 6v5h3l4 4V2l-4 4zM10 6c1 1 1 4 0 5M13 4c3 3 3 6 0 9M16 2c4 4 4 9 0 13" /></svg>
      <span className="ml-[12px] text-[14px]">ENG</span>
      <div className="ml-[16px] text-center text-[14px] leading-6">
        <div>16:57</div>
        <div>17-07-2024</div>
      </div>
      <span className="relative ml-[24px] h-[30px] w-[30px]">
        <svg viewBox="0 0 20 20" className="mt-[4px] h-5 w-5"><path d="M0 0h20v15h-8l-4 4v-4H0z" /><path d="M4 4h13M4 7.500h13M4 11h9" stroke="#d9dadc" strokeWidth="1.500" /></svg>
        <b className="absolute top-[14px] left-[9px] h-5 w-5 rounded-full border border-[#555] bg-[#d9dadc] text-center text-[13px] leading-[18px]">3</b>
      </span>
      <svg viewBox="0 0 26 26" className="ml-[17px] h-[26px] w-[26px]">
        <path d="M8 0h7c3 0 4 2 5 6h-4c-3 0-4 2-5 6l-2 6H3c-3 0-4-2-3-5L4 3c1-2 2-3 4-3z" fill="#1f83dd" /><path d="M2 9l8-1-2 8c0 2-2 3-4 3-3 0-4-3-4-5z" fill="#5cc04a" />
        <path d="M18 24h-7c3 0 4-3 5-6l3-11h3c3 0 4 2 4 5l-3 9c-1 2-3 3-5 3z" fill="#c255c6" /><path d="M14 8l3-2h5l-4 5z" fill="#3f4fd0" />
        <rect x="6" y="17" width="20" height="8" rx="1" fill="#f6c412" /><text x="16" y="24" fontSize="7" fontWeight="700" textAnchor="middle">PRE</text>
      </svg>
      <span className="ml-[22px] h-full w-[6px] border-l border-[#aaa]" />
    </div>
  );
}

function Taskbar() {
  return (
    <footer className="flex h-[50px] items-center bg-[#d9dadc] font-['Open_Sans',sans-serif] text-[14px] leading-5">
      <button aria-label="Start" className="flex w-[60px] justify-center">
        <svg viewBox="0 0 20 20" className="h-5 w-5"><path d="M0 3l8-1.200v7.700H0zM9 1.600L20 0v9.500H9zM0 10.500h8v7.700L0 17zM9 10.500h11V20L9 18.400z" /></svg>
      </button>
      <label className="flex h-[49px] w-[359px] items-center self-end border border-[#c4c4c4] bg-white pl-[14px]">
        <svg viewBox="0 0 20 20" className="h-5 w-5 shrink-0" fill="none" stroke="#111" strokeWidth="1.500"><circle cx="13" cy="7" r="6.200" /><path d="M8.500 11.500l-8 8" /></svg>
        <input aria-label="Search" placeholder="Type here to search" className="ml-[15px] w-0 flex-1 text-[18px] leading-6 outline-none placeholder:text-[#333]" />
        <SearchArt />
      </label>
      <button aria-label="Task View" className="ml-[21px]">
        <svg viewBox="0 0 21 20" className="h-5 w-[21px]" fill="none" stroke="#000" strokeWidth="1.500"><path d="M1 0v3.500h12V0M1 20v-3.500h12V20M1 6h12v8H1zM18.500 0v4M18.500 10v10" /><path d="M17 5h3v4h-3z" fill="#000" stroke="none" /></svg>
      </button>
      <div className="ml-[22px] flex h-full">
        {pinned.map((p) => (
          <button key={p.name} aria-label={p.name} className={`grid h-full w-[62px] place-items-center ${p.active ? 'bg-[#f0f0f1]' : ''}`}>
            <span className="col-start-1 row-start-1">{p.icon}</span>
            {p.mark && <span className={`col-start-1 row-start-1 h-[3px] self-end bg-[#0f78cf] ${p.mark}`} />}
          </button>
        ))}
      </div>
      <Tray />
    </footer>
  );
}

export default function App() {
  return (
    <div className="relative flex min-h-screen flex-col overflow-hidden bg-[#1a1a1a] font-['Lato',sans-serif]">
      <div className="font-['Open_Sans',sans-serif]"><TitleBar /></div>
      <WorkspaceBar />
      <Timeline />
      <div className="h-[28px] border-t-[3px] border-[#171717] bg-[#262626] pl-5 text-[14px] leading-[26px] text-[#4a4a4a]">
        Click to select, or click in empty space and drag to marquee select. Use Shift, Alt, and Ctrl for other options.
      </div>
      <Taskbar />
      <LinkMediaDialog />
      <FilePicker />
      <ImportFailure />
    </div>
  );
}
